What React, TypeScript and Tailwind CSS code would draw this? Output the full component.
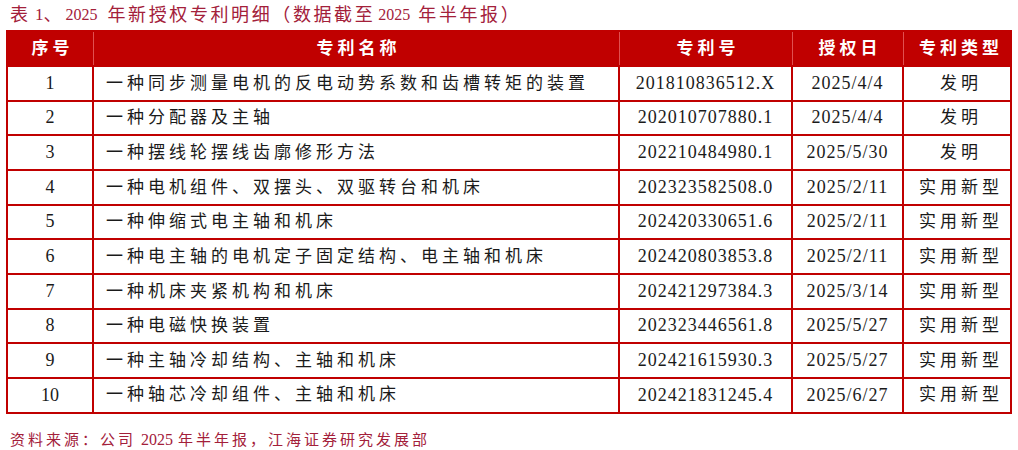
import React from 'react';

type Row = {
  no: string;
  name: string;
  patent: string;
  date: string;
  kind: string;
};

const rows: Row[] = [
  { no: '1', name: '一种同步测量电机的反电动势系数和齿槽转矩的装置', patent: '201810836512.X', date: '2025/4/4', kind: '发明' },
  { no: '2', name: '一种分配器及主轴', patent: '202010707880.1', date: '2025/4/4', kind: '发明' },
  { no: '3', name: '一种摆线轮摆线齿廓修形方法', patent: '202210484980.1', date: '2025/5/30', kind: '发明' },
  { no: '4', name: '一种电机组件、双摆头、双驱转台和机床', patent: '202323582508.0', date: '2025/2/11', kind: '实用新型' },
  { no: '5', name: '一种伸缩式电主轴和机床', patent: '202420330651.6', date: '2025/2/11', kind: '实用新型' },
  { no: '6', name: '一种电主轴的电机定子固定结构、电主轴和机床', patent: '202420803853.8', date: '2025/2/11', kind: '实用新型' },
  { no: '7', name: '一种机床夹紧机构和机床', patent: '202421297384.3', date: '2025/3/14', kind: '实用新型' },
  { no: '8', name: '一种电磁快换装置', patent: '202323446561.8', date: '2025/5/27', kind: '实用新型' },
  { no: '9', name: '一种主轴冷却结构、主轴和机床', patent: '202421615930.3', date: '2025/5/27', kind: '实用新型' },
  { no: '10', name: '一种轴芯冷却组件、主轴和机床', patent: '202421831245.4', date: '2025/6/27', kind: '实用新型' },
];

const font = { fontFamily: '"Liberation Serif", "Noto Sans CJK SC", serif' };

const cols = 'grid grid-cols-[86px_526px_173px_111px_110px]';

export default function App() {
  return (
    <div className="w-[1018px] h-[450px] bg-white text-[#1a1a1a]" style={font}>
      {/* title */}
      <div className="h-[30px] pl-[10px] flex items-center text-[18px] text-[#a3203a] whitespace-nowrap">
        <span className="tracking-[3px]">表</span>
        <span className="ml-[4px] text-[17px]">1</span>
        <span>、</span>
        <span className="ml-[4px] text-[16px]">2025</span>
        <span className="ml-[10px] tracking-[2.6px]">年新授权专利明细（数据截至</span>
        <span className="ml-[3px] text-[16px]">2025</span>
        <span className="ml-[8px] tracking-[2.6px]">年半年报）</span>
      </div>

      {/* table */}
      <div className="ml-[6px] w-[1006px] border-2 border-[#c00000]">
        <div className={`${cols} h-[33px] bg-[#c00000] text-white font-bold text-[17px] tracking-[4px]`}>
          <div className="flex items-center justify-center pl-[4px] border-r border-[#e05050]">序号</div>
          <div className="flex items-center justify-center pl-[4px] border-r border-[#e05050]">专利名称</div>
          <div className="flex items-center justify-center pl-[4px] border-r border-[#e05050]">专利号</div>
          <div className="flex items-center justify-center pl-[4px] border-r border-[#e05050]">授权日</div>
          <div className="flex items-center justify-center pl-[4px]">专利类型</div>
        </div>
        {rows.map((r) => (
          <div key={r.no} className={`${cols} h-[34.67px] border-t-2 border-[#c00000]`}>
            <div className="flex items-center justify-center text-[18px] border-r-2 border-[#c00000]">{r.no}</div>
            <div className="flex items-center pl-[12px] text-[17px] tracking-[4px] whitespace-nowrap border-r-2 border-[#c00000]">
              {r.name}
            </div>
            <div className="flex items-center justify-center text-[18px] tracking-[1px] border-r-2 border-[#c00000]">
              {r.patent}
            </div>
            <div className="flex items-center justify-center text-[18px] tracking-[1px] border-r-2 border-[#c00000]">
              {r.date}
            </div>
            <div className="flex items-center justify-center pl-[4px] text-[17px] tracking-[4px]">{r.kind}</div>
          </div>
        ))}
      </div>

      {/* source */}
      <div className="pt-[16px] pl-[10px] leading-[20px] text-[15px] text-[#a3203a] whitespace-nowrap">
        <span className="tracking-[3px]">资料来源：公司</span>
        <span className="ml-[5px] text-[16px]">2025</span>
        <span className="ml-[5px] tracking-[3px]">年半年报，江海证券研究发展部</span>
      </div>
    </div>
  );
}
